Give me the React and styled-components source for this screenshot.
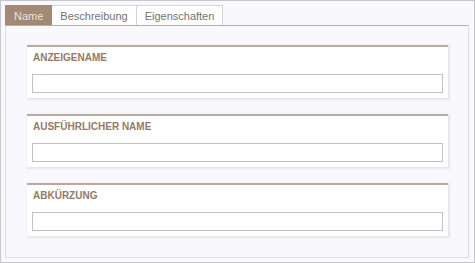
import styled, { createGlobalStyle } from "styled-components";

const Global = createGlobalStyle`
  html, body {
    margin: 0;
    padding: 0;
    background: #ffffff;
  }
  * {
    box-sizing: border-box;
  }
`;

const Frame = styled.div`
  width: 475px;
  height: 263px;
  border: 1px solid #c6c6ca;
  background: #f8f8fd;
  padding: 4px 5px 4px 4px;
  display: flex;
  flex-direction: column;
  font-family: "Liberation Sans", Arial, sans-serif;
`;

const TabRow = styled.div`
  display: flex;
  height: 20px;
`;

const Tab = styled.div`
  height: 20px;
  padding: 0 8px;
  font-size: 11px;
  line-height: 20px;
  border: 1px solid ${(p) => (p.$active ? "#a48a74" : "#d4d4da")};
  border-bottom: none;
  border-left: ${(p) => (p.$first ? "1px solid" : "none")};
  border-left-color: ${(p) => (p.$active ? "#a48a74" : "#d4d4da")};
  background: ${(p) => (p.$active ? "#a48a74" : "#ffffff")};
  color: ${(p) => (p.$active ? "#f2eeea" : "#727272")};
  text-shadow: ${(p) => (p.$active ? "0 0 1px rgba(90,70,55,0.5)" : "none")};
`;

const Panel = styled.div`
  flex: 1;
  border: 1px solid #dcdce2;
  border-top-color: #b8aea4;
  background: #f8f8fd;
  padding: 19px 20px 20px 21px;
  display: flex;
  flex-direction: column;
  gap: 16px;
`;

const Card = styled.div`
  background: #ffffff;
  border-top: 2px solid #b9ab9d;
  box-shadow: 1px 1px 2px 1px rgba(0, 0, 0, 0.08);
  padding: 4px 5px 5px 5px;
  height: 53px;
`;

const Label = styled.div`
  font-size: 10px;
  font-weight: bold;
  line-height: 14px;
  color: #957a64;
  padding-left: 1px;
  margin-bottom: 9px;
`;

const Input = styled.div`
  height: 19px;
  border: 1px solid #c2bfcc;
  background: #ffffff;
`;

const fields = ["ANZEIGENAME", "AUSFÜHRLICHER NAME", "ABKÜRZUNG"];

export default function App() {
  return (
    <>
      <Global />
      <Frame>
        <TabRow>
          <Tab $active $first>
            Name
          </Tab>
          <Tab>Beschreibung</Tab>
          <Tab>Eigenschaften</Tab>
        </TabRow>
        <Panel>
          {fields.map((f) => (
            <Card key={f}>
              <Label>{f}</Label>
              <Input />
            </Card>
          ))}
        </Panel>
      </Frame>
    </>
  );
}
